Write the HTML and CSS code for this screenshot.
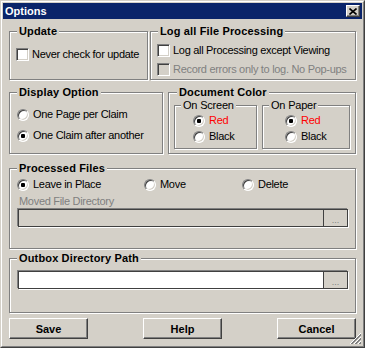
FILE: index.html
```html
<!DOCTYPE html>
<html>
<head>
<meta charset="utf-8">
<link rel="stylesheet" href="styles.css">
</head>
<body>
<div class="window">
  <div class="frame">
    <div class="titlebar">
      <span class="title">Options</span>
      <span class="close"><svg width="8" height="7" viewBox="0 0 8 7"><path d="M0.5 0.5 L7.5 6.5 M7.5 0.5 L0.5 6.5" stroke="#000" stroke-width="1.6" fill="none"/></svg></span>
    </div>
    <div class="content">
      <div class="row row1">
        <div class="group g-update">
          <div class="gtitle">Update</div>
          <div class="check"><span class="box"></span><span>Never check for update</span></div>
        </div>
        <div class="group g-log">
          <div class="gtitle">Log all File Processing</div>
          <div class="check"><span class="box"></span><span>Log all Processing except Viewing</span></div>
          <div class="check disabled"><span class="box"></span><span>Record errors only to log. No Pop-ups</span></div>
        </div>
      </div>
      <div class="row row2">
        <div class="group g-display">
          <div class="gtitle">Display Option</div>
          <div class="radio r1"><span class="dot"></span><span>One Page per Claim</span></div>
          <div class="radio r2"><span class="dot on"></span><span>One Claim after another</span></div>
        </div>
        <div class="group g-doc">
          <div class="gtitle">Document Color</div>
          <div class="subs">
            <div class="group sub s-screen">
              <div class="stitle">On Screen</div>
              <div class="radio sr1"><span class="dot on"></span><span class="red">Red</span></div>
              <div class="radio sr2"><span class="dot"></span><span>Black</span></div>
            </div>
            <div class="group sub s-paper">
              <div class="stitle">On Paper</div>
              <div class="radio sr1"><span class="dot on"></span><span class="red">Red</span></div>
              <div class="radio sr2"><span class="dot"></span><span>Black</span></div>
            </div>
          </div>
        </div>
      </div>
      <div class="group g-processed">
        <div class="gtitle">Processed Files</div>
        <div class="pf-row">
          <div class="radio pf-leave"><span class="dot on"></span><span>Leave in Place</span></div>
          <div class="radio pf-move"><span class="dot"></span><span>Move</span></div>
          <div class="radio pf-delete"><span class="dot"></span><span>Delete</span></div>
        </div>
        <div class="plabel">Moved File Directory</div>
        <div class="pathbox"><span class="field disabled-field"></span><span class="browse">...</span></div>
      </div>
      <div class="group g-outbox">
        <div class="gtitle">Outbox Directory Path</div>
        <div class="pathbox"><span class="field"></span><span class="browse">...</span></div>
      </div>
      <div class="buttons">
        <div class="btn">Save</div>
        <div class="btn">Help</div>
        <div class="btn">Cancel</div>
      </div>
    </div>
  </div>
  <svg class="grip" width="12" height="12" viewBox="0 0 12 12" shape-rendering="crispEdges">
    <path d="M11 0 L0 11" stroke="#fff" fill="none"/>
    <path d="M11 1 L1 11 M11 2 L2 11" stroke="#808080" fill="none"/>
    <path d="M11 4 L4 11" stroke="#fff" fill="none"/>
    <path d="M11 5 L5 11 M11 6 L6 11" stroke="#808080" fill="none"/>
    <path d="M11 8 L8 11" stroke="#fff" fill="none"/>
    <path d="M11 9 L9 11 M11 10 L10 11" stroke="#808080" fill="none"/>
  </svg>
</div>
</body>
</html>
```

FILE: styles.css
```css
body {
  margin: 0;
  font-family: "Liberation Sans", Arial, sans-serif;
  font-size: 11px;
  color: #000;
  background: #d4d0c8;
}
.window {
  width: 365px;
  height: 348px;
  box-sizing: border-box;
  border: 1px solid;
  border-color: #d4d0c8 #404040 #404040 #d4d0c8;
  background: #d4d0c8;
  position: relative;
}
.frame {
  height: 100%;
  box-sizing: border-box;
  border: 1px solid;
  border-color: #fff #808080 #808080 #fff;
  padding: 1px;
  display: flex;
  flex-direction: column;
}
.titlebar {
  height: 16px;
  flex: none;
  background: #0a246a;
  color: #fff;
  font-weight: bold;
  display: flex;
  align-items: center;
  justify-content: space-between;
  padding: 0 2px;
}
.close {
  width: 14px;
  height: 12px;
  box-sizing: border-box;
  background: #d4d0c8;
  border: 1px solid;
  border-color: #fff #404040 #404040 #fff;
  box-shadow: inset -1px -1px #808080;
  display: flex;
  align-items: center;
  justify-content: center;
}
.close svg { display: block; }
.content {
  padding: 12px 6px 0;
  display: flex;
  flex-direction: column;
}
.row { display: flex; }
.row1 { gap: 2px; }
.row2 { margin-top: 12px; gap: 5px; }

.group {
  border: 1px solid #808080;
  box-shadow: inset 1px 1px #fff, 1px 1px #fff;
  display: flex;
  flex-direction: column;
  align-items: flex-start;
  box-sizing: border-box;
  padding: 0 6px;
}
.gtitle {
  margin: -7px 0 0 1px;
  padding: 0 2px;
  background: #d4d0c8;
  font-weight: bold;
  line-height: 13px;
  letter-spacing: 0.15px;
}
.stitle {
  margin: -7px 0 0 6px;
  padding: 0 2px;
  background: #d4d0c8;
  line-height: 13px;
  letter-spacing: -0.2px;
}

.check, .radio {
  display: flex;
  align-items: center;
  height: 13px;
  line-height: 13px;
  letter-spacing: -0.3px;
  white-space: nowrap;
}
.check { gap: 3px; }
.radio { gap: 4px; }
.box {
  width: 13px;
  height: 13px;
  box-sizing: border-box;
  border: 1px solid;
  border-color: #808080 #fff #fff #808080;
  box-shadow: inset 1px 1px #404040, inset -1px -1px #d4d0c8;
  background: #fff;
  flex: none;
}
.disabled { color: #808080; }
.disabled .box { background: #d4d0c8; }
.dot {
  width: 12px;
  height: 12px;
  box-sizing: border-box;
  border-radius: 50%;
  border: 1px solid;
  border-color: #808080 #fff #fff #808080;
  box-shadow: inset 1px 1px #404040, inset -1px -1px #d4d0c8;
  background: #fff;
  flex: none;
  display: flex;
  align-items: center;
  justify-content: center;
}
.dot.on::after {
  content: "";
  width: 4px;
  height: 4px;
  border-radius: 1px;
  background: #000;
}
.red { color: #f00; }

.g-update { width: 139px; }
.g-update .check { margin-top: 10px; }
.g-log { width: 206px; padding-bottom: 3px; }
.g-log .check { margin-top: 6px; }

.g-display { width: 154px; padding: 0 7px; }
.g-display .gtitle { margin-left: 0; }
.g-display .r1 { margin-top: 9px; }
.g-display .r2 { margin-top: 8px; }

.g-doc { width: 188px; padding: 0 5px 4px; }
.g-doc .gtitle { margin-left: 3px; }
.subs {
  display: flex;
  gap: 5px;
  margin-top: 6px;
  align-self: stretch;
}
.sub { padding: 0 0 5px; }
.s-screen { width: 83px; }
.s-paper { width: 88px; }
.sub .sr1 { margin-top: 2px; }
.sub .sr2 { margin-top: 3px; }
.s-screen .radio { margin-left: 18px; }
.s-paper .radio { margin-left: 22px; }

.g-processed {
  margin-top: 14px;
  padding: 0 7px 21px;
}
.g-processed .gtitle { margin-left: 0; }
.pf-row { display: flex; margin-top: 3px; }
.pf-leave { width: 127px; }
.pf-move { width: 98px; }
.plabel {
  margin: 4px 0 0 2px;
  line-height: 13px;
  color: #808080;
  letter-spacing: -0.3px;
}
.pathbox {
  align-self: stretch;
  margin: 1px 0 0 1px;
  height: 18px;
  box-sizing: border-box;
  border: 1px solid #404040;
  box-shadow: -1px -1px 0 #808080, 1px 1px 0 #fff;
  display: flex;
}
.field { flex: 1; background: #fff; }
.disabled-field { background: #d4d0c8; }
.browse {
  width: 23px;
  border-left: 1px solid #404040;
  background: #d4d0c8;
  color: #808080;
  font-size: 9px;
  line-height: 12px;
  display: flex;
  align-items: flex-end;
  justify-content: center;
}

.g-outbox {
  margin-top: 9px;
  padding: 0 7px 23px;
}
.g-outbox .gtitle { margin-left: 0; }
.g-outbox .pathbox { margin-top: 6px; }

.buttons {
  margin-top: 5px;
  display: flex;
  justify-content: space-between;
}
.btn {
  width: 79px;
  height: 21px;
  box-sizing: border-box;
  border: 1px solid;
  border-color: #fff #404040 #404040 #fff;
  box-shadow: inset -1px -1px #808080;
  font-weight: bold;
  display: flex;
  align-items: center;
  justify-content: center;
}
.grip {
  position: absolute;
  right: 2px;
  bottom: 2px;
}
```
